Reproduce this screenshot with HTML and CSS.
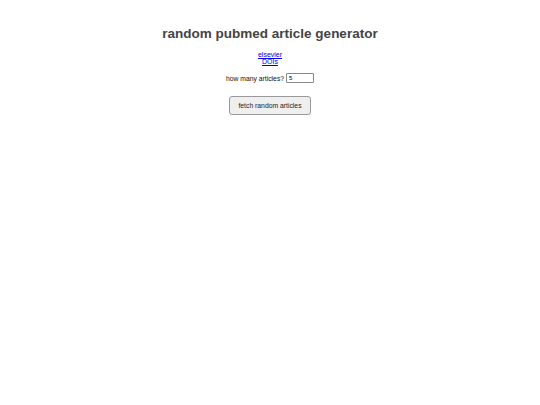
FILE: index.html
```html
<!DOCTYPE html>
<html>
<head>
<meta charset="utf-8">
<link rel="stylesheet" href="styles.css">
</head>
<body>
<div class="page">
  <h1 class="title">random pubmed article generator</h1>
  <div class="links">
    <a href="#">elsevier</a>
    <a href="#">DOIs</a>
  </div>
  <div class="count">
    <label for="n">how many articles?</label>
    <input id="n" class="num" type="text" value="5">
  </div>
  <button class="fetch">fetch random articles</button>
</div>
</body>
</html>
```

FILE: styles.css
```css
html, body {
  margin: 0;
  padding: 0;
  background: #fff;
}
.page {
  display: flex;
  flex-direction: column;
  align-items: center;
  font-family: "Liberation Sans", Arial, sans-serif;
  color: #111;
  padding-top: 25px;
}
.title {
  margin: 0;
  font-size: 13.5px;
  font-weight: bold;
  color: #444;
  line-height: 18px;
}
.links {
  margin-top: 8px;
  display: flex;
  flex-direction: column;
  align-items: center;
  font-size: 7px;
  line-height: 7px;
}
.links a {
  color: #00e;
}
.count {
  margin-top: 8px;
  display: flex;
  align-items: center;
  gap: 2px;
  font-size: 6.8px;
}
.num {
  width: 22px;
  height: 6px;
  padding: 1px 2px;
  font-size: 6px;
  font-family: "Liberation Sans", Arial, sans-serif;
  border: 1px solid #888;
  border-radius: 1px;
}
.fetch {
  margin-top: 13px;
  width: 82px;
  height: 19px;
  font-size: 6.8px;
  font-family: "Liberation Sans", Arial, sans-serif;
  color: #222;
  background: #efefef;
  border: 1px solid #999;
  border-radius: 3px;
  padding: 0;
}
```
